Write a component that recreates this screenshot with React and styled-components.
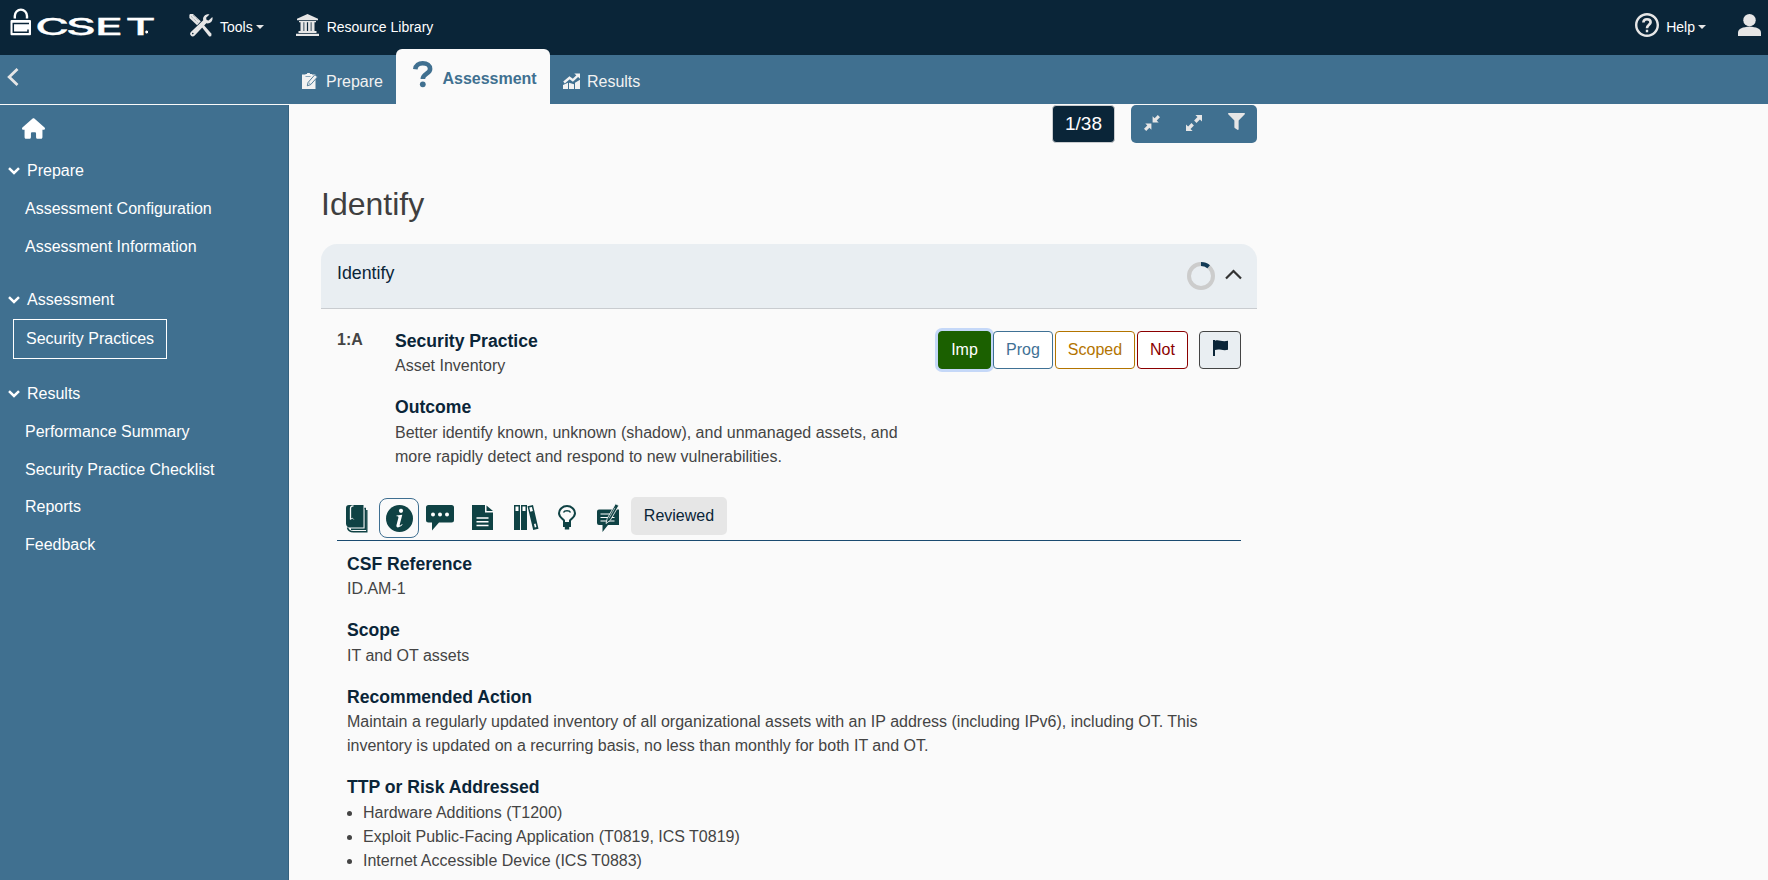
import React from 'react';
import styled, { createGlobalStyle, css } from 'styled-components';
import { FaHouse } from 'react-icons/fa6';
import { FaFilter } from 'react-icons/fa';

const navy = '#0a2538';
const blue = '#407090';
const light = '#e6e6e6';
const teal = '#0f4244';

const Global = createGlobalStyle`
  * { box-sizing: border-box; }
  html, body { margin: 0; padding: 0; }
  body {
    background: #fafafa;
    color: #444;
    font-family: "Liberation Sans", Arial, sans-serif;
    font-size: 16px;
    line-height: 24px;
    overflow: hidden;
  }
  svg { display: block; flex: none; }
  button { font: inherit; }
`;

const Page = styled.div`
  display: flex;
  flex-direction: column;
  width: 100%;
  height: 880px;
  overflow: hidden;
`;

const Header = styled.header`
  display: flex;
  align-items: center;
  flex: none;
  height: 55px;
  padding: 0 7px 5px 10px;
  background: ${navy};
  color: #fff;
  font-size: 14px;
`;

const NavItem = styled.a`
  display: flex;
  align-items: center;
  gap: ${p => p.$gap}px;
  margin-left: ${p => p.$left};
`;

const NavText = styled.span`
  display: flex;
  align-items: center;
  gap: 3px;
  padding-top: 4px;
`;

const Caret = styled.span`
  border: 4px solid transparent;
  border-top-color: ${light};
  border-bottom: 0;
`;

const TabBar = styled.nav`
  display: flex;
  align-items: flex-end;
  flex: none;
  height: 49px;
  background: ${blue};
`;

const BackArea = styled.div`
  width: 289px;
  height: 49px;
  padding: 13px 7px;
  color: ${light};
`;

const Tab = styled.a`
  display: flex;
  align-items: center;
  height: 49px;
  color: #f2f2f2;
  padding: 4px 13px 0 ${p => p.$left}px;
  gap: ${p => p.$gap}px;
  ${p => p.$active && css`
    height: 55px;
    width: 154px;
    padding: 0 0 5px 17px;
    background: #fafafa;
    border-radius: 6px 6px 0 0;
    color: ${blue};
    font-weight: bold;
  `}
`;

const TabLabel = styled.span`
  margin-top: ${p => p.$shift || 0}px;
`;

const Body = styled.div`
  display: flex;
  flex: 1;
  min-height: 0;
`;

const Sidebar = styled.aside`
  width: 289px;
  margin-top: 1px;
  padding-top: 12px;
  background: ${blue};
  border-right: 1px solid #35617e;
  color: #fff;
`;

const HomeLink = styled.a`
  display: block;
  height: 35px;
  padding-left: 22px;
`;

const NavGroup = styled.section`
  margin-bottom: ${p => p.$after || 0}px;
`;

const GroupTitle = styled.div`
  display: flex;
  align-items: center;
  gap: 7px;
  height: 38px;
  padding-left: 8px;
`;

const NavLink = styled.a`
  display: flex;
  align-items: center;
  height: 37.7px;
  padding-left: 25px;
  ${p => p.$active && css`
    width: 154px;
    height: 40px;
    margin-left: 13px;
    padding-left: 12px;
    border: 1px solid #fff;
  `}
`;

const Main = styled.main`
  width: 936px;
  margin-left: 32px;
`;

const Toolbar = styled.div`
  display: flex;
  justify-content: flex-end;
  gap: 16px;
  padding-top: 1px;
`;

const Counter = styled.div`
  width: 63px;
  height: 38px;
  border: 1px solid #c9cccf;
  border-radius: 4px;
  background: ${navy};
  color: #fff;
  font-size: 19px;
  line-height: 36px;
  text-align: center;
`;

const ToolGroup = styled.div`
  display: flex;
  width: 126px;
  height: 38px;
  border-radius: 5px;
  background: ${blue};
  color: ${light};
`;

const ToolButton = styled.span`
  display: flex;
  justify-content: center;
  flex: 1;
  padding-top: ${p => p.$top}px;
`;

const PageTitle = styled.h2`
  margin: 40px 0 0;
  color: #3f3f3f;
  font-size: 32px;
  font-weight: 400;
  line-height: 42px;
`;

const CardHeader = styled.div`
  display: flex;
  justify-content: space-between;
  height: 65px;
  margin-top: 19px;
  padding: 0 15px 0 16px;
  border-bottom: 1px solid #c9ccd0;
  border-radius: 16px 16px 0 0;
  background: #e9eef2;
  color: ${navy};
  font-size: 17.8px;
  line-height: 58px;
`;

const HeaderTools = styled.div`
  display: flex;
  align-items: center;
  gap: 10px;
  color: #333;
`;

const Question = styled.section`
  padding: 22px 16px 0;
`;

const QuestionTop = styled.div`
  display: flex;
  height: 167px;
`;

const QuestionNumber = styled.div`
  width: 58px;
  margin-top: -3px;
  font-weight: bold;
`;

const QuestionText = styled.div`
  width: 510px;
  margin-top: -1.25px;
`;

const Section = styled.div`
  margin-bottom: 18px;
`;

const SectionTitle = styled.h4`
  margin: 0 0 2.5px;
  color: ${navy};
  font-size: 17.6px;
  line-height: 22px;
`;

const Answers = styled.div`
  display: flex;
  gap: 2px;
  margin-left: auto;
`;

const Answer = styled.button`
  width: ${p => p.$width}px;
  height: 38px;
  padding: 0;
  border: 1px solid ${p => p.$color};
  border-radius: 4px;
  background: #fff;
  color: ${p => p.$color};
  ${p => p.$selected && css`
    background: ${p.$color};
    color: #fff;
    box-shadow: 0 0 0 3px #c5d8f8;
  `}
`;

const FlagButton = styled.button`
  display: flex;
  justify-content: center;
  width: 42px;
  height: 38px;
  margin-left: 9px;
  padding: 8px 0 0;
  border: 1px solid #444;
  border-radius: 4px;
  background: #e9eef2;
`;

const IconRow = styled.div`
  display: flex;
  height: 43px;
  padding-left: 9px;
  border-bottom: 1px solid #1a4b70;
  color: ${teal};
`;

const RowIcon = styled.span`
  width: ${p => p.$width}px;
  padding-top: ${p => p.$top || 7}px;
`;

const InfoButton = styled.span`
  display: flex;
  align-items: center;
  justify-content: center;
  width: 40px;
  height: 40px;
  margin: 0 7px 0 -1px;
  border: 1px solid #3f6f91;
  border-radius: 8px;
`;

const Reviewed = styled.div`
  width: 96px;
  height: 38px;
  margin-top: -1px;
  border-radius: 5px;
  background: #e6e6e6;
  color: ${navy};
  line-height: 37px;
  text-align: center;
`;

const Details = styled.div`
  padding: 11.75px 10px 0;
`;

const Techniques = styled.ul`
  margin: 0;
  padding-left: 16px;
`;

const Logo = () => (
  <svg width="146" height="30" viewBox="0 0 146 30" overflow="visible">
    <path d="M4.800 8.500V6a6 6.300 0 0 1 12.200 0v2.500" fill="none" stroke="#fff" strokeWidth="2.400" />
    <rect x=".500" y="10" width="20.500" height="15.300" rx="1" fill="#fff" />
    <path d="M19 13.400H3.300v8.800H18v-2.700" fill="none" stroke={navy} strokeWidth="1.500" />
    <text
      transform="scale(2.05 1)"
      x="12.300 27.300 41.500 56.300"
      y="25.200"
      fill="#fff"
      stroke="#fff"
      strokeWidth=".3"
      fontFamily="Inter, 'Liberation Sans', sans-serif"
      fontSize="22.500"
      fontWeight="500"
    >CSET</text>
    <circle cx="136.700" cy="22" r="2" fill="#fff" stroke={navy} strokeWidth="1" />
  </svg>
);

const ToolsIcon = () => (
  <svg width="24" height="23" viewBox="0 0 24 23" fill={light}>
    <path d="M1 0h3l7.800 7.200-3.700 4L.4 4V1z" />
    <path d="M11.500 11.500l2-2 9 10.300-.3 2.500-2 .2z" />
    <path d="M20.500.4l-3.400 3.400.5 2.200 2 .5L23.300 3c1.200 3.500-1.800 7.200-6 6.300L5.700 21.500c-2.500 2.700-6.300-.9-3.800-3.600L14.200 6.300c-.9-3.600 2.500-7 6.300-5.900z" />
    <path d="M2 2.300l6.800 6.500M4 1l6 5.600" stroke={navy} strokeWidth=".4" strokeDasharray="1 1" />
    <circle cx="3.800" cy="19.600" r=".8" fill={navy} />
  </svg>
);

const LibraryIcon = () => (
  <svg width="23" height="22" viewBox="0 0 23 22" fill={light}>
    <path d="M11.500 0L22 4.800v1.400H1V4.800z" />
    <path d="M3 7h17v1.200H3zM4.500 8h3v9h-3zM8.300 8h2.600v9H8.300zM12.100 8h2.600v9h-2.600zM15.500 8h3v9h-3zM2.500 17h18v2h-18zM0 19.700h23V22H0z" />
  </svg>
);

const HelpIcon = () => (
  <svg width="24" height="24" viewBox="2 2 20 20" fill={light}>
    <path d="M11 18h2v-2h-2v2zm1-16C6.480 2 2 6.480 2 12s4.480 10 10 10 10-4.480 10-10S17.520 2 12 2zm0 18c-4.410 0-8-3.590-8-8s3.590-8 8-8 8 3.590 8 8-3.590 8-8 8z" />
    <path d="M9 10c0-1.800 1.300-2.800 3-2.800s3 1 3 2.600c0 2-3 2.200-3 4.900" fill="none" stroke={light} strokeWidth="2.200" />
  </svg>
);

const UserIcon = () => (
  <svg width="23" height="22" viewBox="0 0 23 22" fill={light}>
    <circle cx="11.500" cy="6.200" r="6.200" />
    <path d="M0 22v-3.500c0-3.600 5-5.700 11.500-5.700S23 14.900 23 18.500V22z" />
  </svg>
);

const Chevron = ({ d, w, h, sw }) => (
  <svg width={w} height={h} viewBox={`0 0 ${w} ${h}`} fill="none" stroke="currentColor" strokeWidth={sw}>
    <path d={d} />
  </svg>
);

const PrepareIcon = () => (
  <svg width="17" height="17" viewBox="0 0 17 17">
    <path d="M0 1.500h3.500V1H5a1.500 1.500 0 0 1 3 0h2v.5h3.500v14.500H0z" fill="#f2f2f2" />
    <path d="M5.300 12.800l.8-3.400 6.800-7.700 2.600 2.200-6.800 7.700z" fill="#f2f2f2" stroke={blue} strokeWidth=".9" />
    <path d="M6.800 9.600l1.800 1.600M3.500 3.500h5" stroke={blue} strokeWidth=".6" />
  </svg>
);

const QuestionIcon = () => (
  <svg width="20" height="27" viewBox="0 0 20 27" fill="none">
    <path d="M2.300 8.200C2.600 4.400 5.700 2.300 9.700 2.300c4.400 0 7.400 2.300 7.400 5.700 0 4.700-7.300 4.700-7.300 10" stroke={blue} strokeWidth="4.600" />
    <circle cx="9.800" cy="23.300" r="2.900" fill={blue} />
  </svg>
);

const ResultsIcon = () => (
  <svg width="18" height="17" viewBox="0 0 18 17" fill="#f2f2f2">
    <path d="M0 12l5-2.300V16H0zM6 9.700l5 1.500V16H6zM12 9.800l5-3V16h-5z" />
    <path d="M1 9.500l5.500-4.700 3.300 2.500L14.500 2.800" stroke="#f2f2f2" strokeWidth="2.400" fill="none" />
    <path d="M11.300.5H17v5.200z" />
  </svg>
);

const CompressIcon = () => (
  <svg width="16" height="16" viewBox="0 0 16 16" fill="currentColor">
    <path d="M8.600 7.400V1.300l2 2L13.800 0 16 2.200l-3.300 3.200 2 2zM7.400 8.600v6.100l-2-2L2.200 16 0 13.800l3.300-3.200-2-2z" />
  </svg>
);

const ExpandIcon = () => (
  <svg width="16" height="16" viewBox="0 0 16 16" fill="currentColor">
    <path d="M16 0v6.600l-2.100-2.100-3.400 3.400-2.400-2.400L11.500 2.100 9.400 0zM0 16V9.400l2.100 2.100 3.400-3.400 2.400 2.400-3.400 3.400L6.600 16z" />
  </svg>
);

const ProgressRing = () => (
  <svg width="28" height="28" viewBox="0 0 28 28" fill="none" strokeWidth="4">
    <circle cx="14" cy="14" r="12" stroke="#ccc" />
    <path d="M14 2a12 12 0 0 1 7.700 2.800" stroke="#123a56" />
  </svg>
);

const FlagIcon = () => (
  <svg width="17" height="17" viewBox="0 0 17 17" fill={navy}>
    <path d="M1 0h2v16H1z" />
    <path d="M3 .8c4-1.600 6 1.300 13 0V9.700c-5.500 1.500-8.500-1.500-13 .3z" />
  </svg>
);

const BookIcon = () => (
  <svg width="22" height="28" viewBox="0 0 22 28">
    <path d="M3 0h14.500v22.500H4A4 4 0 0 1 0 18.800V3a3 3 0 0 1 3-3z" fill={teal} />
    <path d="M4.500 14.500V3.500Q4.500.8 7.500.8" fill="none" stroke="#fafafa" strokeWidth="1.300" />
    <path d="M4.500 14.500l1.700-1.500 1.500 1.500" fill="none" stroke="#fafafa" strokeWidth=".8" />
    <path d="M18.300 3.500h1v20.800H5M20.800 5v21.700H7.500C4 26.700 2 25 1.500 22.500" fill="none" stroke={teal} strokeWidth="1.400" />
  </svg>
);

const InfoIcon = () => (
  <svg width="27" height="27" viewBox="0 0 27 27">
    <circle cx="13.500" cy="13.500" r="13.500" fill={teal} />
    <circle cx="15" cy="5.800" r="2.100" fill="#fff" />
    <path d="M10.500 10.600l5.800-.9-2.600 10c-.3 1.300.5 1.200 2.300-.7l.6.6c-2.500 3.300-7 4-6.100.4l1.900-7.300c.2-1-.3-1.300-1.900-1.400z" fill="#fff" />
  </svg>
);

const CommentIcon = () => (
  <svg width="28" height="26" viewBox="0 0 28 26">
    <path d="M2.500 0h23A2.500 2.500 0 0 1 28 2.500V15a2.500 2.500 0 0 1-2.500 2.500H13L6 25.500v-8H2.500A2.500 2.500 0 0 1 0 15V2.500A2.500 2.500 0 0 1 2.500 0z" fill={teal} />
    <g fill="#fff"><circle cx="7" cy="9.500" r="2" /><circle cx="14" cy="9.500" r="2" /><circle cx="21" cy="9.500" r="2" /></g>
  </svg>
);

const DocIcon = () => (
  <svg width="21" height="25" viewBox="0 0 21 25">
    <path d="M0 0h13v7.500h8V25H0zM14.500 .5L21 6h-6.500z" fill={teal} />
    <path d="M4.500 13h12M4.500 16.700h12M4.500 20.500h12" stroke="#fff" strokeWidth="1.600" />
  </svg>
);

const BooksIcon = () => (
  <svg width="25" height="25" viewBox="0 0 25 25">
    <path d="M0 0h6v25H0zM7 0h6v25H7zM13.500 1.200l5.500-1.200 5.500 23.800-5.300 1.200z" fill={teal} />
    <path d="M1.500 1.500h3V6h-3zM8.500 1.500h3V6h-3zM15.300 2.500l2.600-.6 1 4.200-2.600.6z" fill="#fff" />
    <path d="M20 19l1.600-.4.800 3.500-1.600.4z" fill="#fff" />
  </svg>
);

const BulbIcon = () => (
  <svg width="18" height="25" viewBox="0 0 18 25" fill="none" stroke={teal}>
    <path d="M6 18.500v-3C3.500 13 1 11.500 1 8.300a8 7.300 0 0 1 16 0c0 3.200-2.500 4.700-5 7.200v3z" strokeWidth="2" />
    <path d="M5.500 7.500C6 6.200 7.500 5.700 9 5.700s3 .5 3.500 1.800" strokeWidth="1.500" />
    <path d="M5 17h8v5h-1.800v2.500H6.800V22H5z" fill={teal} stroke="none" />
  </svg>
);

const NoteIcon = () => (
  <svg width="23" height="29" viewBox="0 0 23 29">
    <path d="M2 6.500h20v15.500H11l-5.500 7v-7H2a2 2 0 0 1-2-2V8.500a2 2 0 0 1 2-2z" fill={teal} />
    <path d="M3.500 11h11M3.500 14.500h14M3.500 18h14" stroke="#fff" strokeWidth="1.100" />
    <path d="M9 20.500l1.200-5L18.500 .8l3.300 1.800-8.500 14.700z" fill={teal} stroke="#fff" strokeWidth=".8" />
    <path d="M12 15.300l6-10.500" stroke="#fff" strokeWidth=".6" />
  </svg>
);

const groups = [
  { title: 'Prepare', after: 15.6, links: ['Assessment Configuration', 'Assessment Information'] },
  { title: 'Assessment', after: 16, links: ['Security Practices'] },
  { title: 'Results', after: 0, links: ['Performance Summary', 'Security Practice Checklist', 'Reports', 'Feedback'] },
];

const answers = [
  { label: 'Imp', width: 53, color: '#1b6000', selected: true },
  { label: 'Prog', width: 60, color: '#3f7195' },
  { label: 'Scoped', width: 80, color: '#b37400' },
  { label: 'Not', width: 51, color: '#8b0000' },
];

export default function App() {
  return (
    <Page>
      <Global />
      <Header>
        <Logo />
        <NavItem $left="33px" $gap={7}>
          <ToolsIcon />
          <NavText>Tools<Caret /></NavText>
        </NavItem>
        <NavItem $left="32px" $gap={8}>
          <LibraryIcon />
          <NavText>Resource Library</NavText>
        </NavItem>
        <NavItem $left="auto" $gap={7}>
          <HelpIcon />
          <NavText>Help<Caret /></NavText>
        </NavItem>
        <NavItem $left="32px" $gap={0}>
          <UserIcon />
        </NavItem>
      </Header>
      <TabBar>
        <BackArea>
          <Chevron w={12} h={18} sw={2.8} d="M10.500 1L2.200 9l8.300 8" />
        </BackArea>
        <Tab $left={13} $gap={7}>
          <PrepareIcon />
          <TabLabel>Prepare</TabLabel>
        </Tab>
        <Tab $active $gap={9.5}>
          <QuestionIcon />
          <TabLabel $shift={9}>Assessment</TabLabel>
        </Tab>
        <Tab $left={13} $gap={6}>
          <ResultsIcon />
          <TabLabel>Results</TabLabel>
        </Tab>
      </TabBar>
      <Body>
        <Sidebar>
          <HomeLink><FaHouse size={23} color="#fff" /></HomeLink>
          {groups.map(g => (
            <NavGroup key={g.title} $after={g.after}>
              <GroupTitle>
                <Chevron w={12} h={8} sw={2.5} d="M1 1.200l5 4.800 5-4.800" />
                {g.title}
              </GroupTitle>
              {g.links.map(l => (
                <NavLink key={l} $active={l === 'Security Practices'}>{l}</NavLink>
              ))}
            </NavGroup>
          ))}
        </Sidebar>
        <Main>
          <Toolbar>
            <Counter>1/38</Counter>
            <ToolGroup>
              <ToolButton $top={10}><CompressIcon /></ToolButton>
              <ToolButton $top={10}><ExpandIcon /></ToolButton>
              <ToolButton $top={8}><FaFilter size={17} /></ToolButton>
            </ToolGroup>
          </Toolbar>
          <PageTitle>Identify</PageTitle>
          <CardHeader>
            Identify
            <HeaderTools>
              <ProgressRing />
              <Chevron w={17} h={14} sw={2.2} d="M1 9.500l7.500-7.500L16 9.500" />
            </HeaderTools>
          </CardHeader>
          <Question>
            <QuestionTop>
              <QuestionNumber>1:A</QuestionNumber>
              <QuestionText>
                <Section>
                  <SectionTitle>Security Practice</SectionTitle>
                  Asset Inventory
                </Section>
                <Section>
                  <SectionTitle>Outcome</SectionTitle>
                  Better identify known, unknown (shadow), and unmanaged assets, and more rapidly detect and respond to new vulnerabilities.
                </Section>
              </QuestionText>
              <Answers>
                {answers.map(a => (
                  <Answer key={a.label} $width={a.width} $color={a.color} $selected={a.selected}>{a.label}</Answer>
                ))}
                <FlagButton><FlagIcon /></FlagButton>
              </Answers>
            </QuestionTop>
            <IconRow>
              <RowIcon $width={34}><BookIcon /></RowIcon>
              <InfoButton><InfoIcon /></InfoButton>
              <RowIcon $width={46}><CommentIcon /></RowIcon>
              <RowIcon $width={42}><DocIcon /></RowIcon>
              <RowIcon $width={44}><BooksIcon /></RowIcon>
              <RowIcon $width={39}><BulbIcon /></RowIcon>
              <RowIcon $width={34} $top={5}><NoteIcon /></RowIcon>
              <Reviewed>Reviewed</Reviewed>
            </IconRow>
            <Details>
              <Section>
                <SectionTitle>CSF Reference</SectionTitle>
                ID.AM-1
              </Section>
              <Section>
                <SectionTitle>Scope</SectionTitle>
                IT and OT assets
              </Section>
              <Section>
                <SectionTitle>Recommended Action</SectionTitle>
                Maintain a regularly updated inventory of all organizational assets with an IP address (including IPv6), including OT. This inventory is updated on a recurring basis, no less than monthly for both IT and OT.
              </Section>
              <Section>
                <SectionTitle>TTP or Risk Addressed</SectionTitle>
                <Techniques>
                  <li>Hardware Additions (T1200)</li>
                  <li>Exploit Public-Facing Application (T0819, ICS T0819)</li>
                  <li>Internet Accessible Device (ICS T0883)</li>
                </Techniques>
              </Section>
            </Details>
          </Question>
        </Main>
      </Body>
    </Page>
  );
}
